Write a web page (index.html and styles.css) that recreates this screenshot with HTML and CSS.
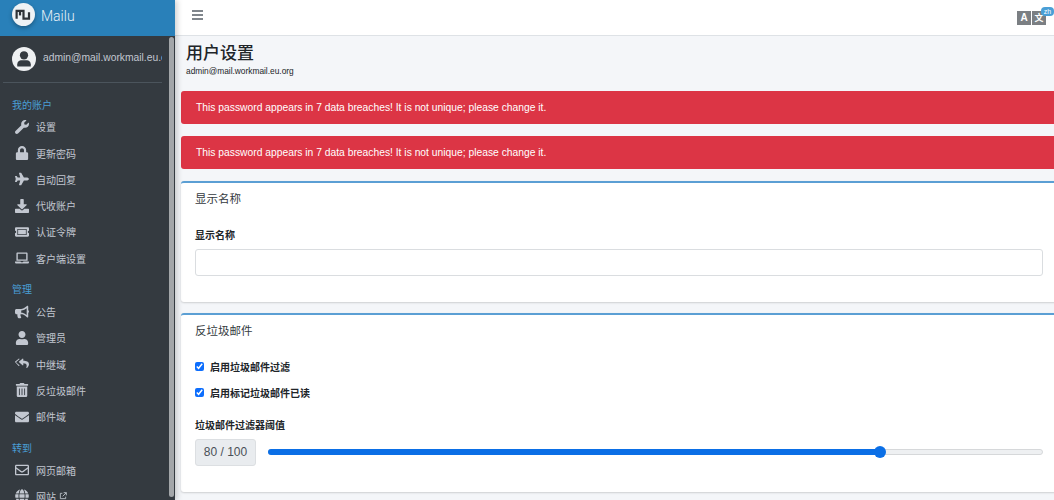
FILE: index.html
```html
<!DOCTYPE html>
<html lang="zh">
<head>
<meta charset="utf-8">
<title>Mailu</title>
<link rel="stylesheet" href="styles.css">
</head>
<body>
<aside class="sidebar">
  <div class="brand">
    <span class="brand-logo">
      <svg viewBox="0 0 18 12" width="17" height="11"><path d="M1.500 10.500V2h7.500v8.500h6V3.500" fill="none" stroke="#2f3338" stroke-width="2.400"/><path d="M5.200 2v5" fill="none" stroke="#2f3338" stroke-width="2.400"/></svg>
    </span>
    <span class="brand-text">Mailu</span>
  </div>
  <div class="side-body">
    <div class="side-scroll">
      <div class="user">
        <span class="avatar">
          <svg viewBox="0 0 24 24" width="18" height="18"><circle cx="12" cy="7" r="5.500" fill="#343a40"/><path d="M3 22v-3c0-3.500 3-5.500 5-5.500h8c2 0 5 2 5 5.500v3z" fill="#343a40"/></svg>
        </span>
        <span class="user-name">admin@mail.workmail.eu.org</span>
      </div>
      <nav class="nav">
        <div class="nav-head nav-head-first">我的账户</div>
        <a class="nav-item"><svg class="ico" viewBox="0 0 512 512"><path d="M507.700 109.100c-2.200-9-13.500-12.100-20.100-5.500l-74.400 74.400-67.900-11.300-11.300-67.900 74.400-74.400c6.600-6.600 3.400-17.900-5.700-20.200-47.400-11.700-99.600 .9-136.600 37.900-39.600 39.600-50.400 97.100-34.100 147.200L18.700 402.800c-25 25-25 65.500 0 90.500 25 25 65.500 25 90.500 0l213.200-213.200c50.100 16.700 107.500 5.700 147.400-34.200 37.100-37.100 49.700-89.300 37.900-136.800z"/></svg><span>设置</span></a>
        <a class="nav-item"><svg class="ico" viewBox="0 0 448 512"><path d="M400 224h-24v-72C376 68.200 307.800 0 224 0S72 68.200 72 152v72H48c-26.500 0-48 21.500-48 48v192c0 26.500 21.500 48 48 48h352c26.500 0 48-21.500 48-48V272c0-26.500-21.500-48-48-48zm-104 0H152v-72c0-39.700 32.300-72 72-72s72 32.300 72 72v72z"/></svg><span>更新密码</span></a>
        <a class="nav-item"><svg class="ico" viewBox="0 0 576 512"><path d="M480 192H365.700L260.600 8.100A16 16 0 0 0 246.700 0h-65.500c-10.600 0-18.300 10.200-15.400 20.400L214.900 192H112l-43.200-57.600c-3-4-7.800-6.400-12.800-6.400H16C5.600 128-2 137.800 .5 147.900L32 256 .5 364.100C-2 374.200 5.600 384 16 384h40c5 0 9.800-2.400 12.800-6.400L112 320h102.900l-49 171.600c-2.900 10.200 4.800 20.400 15.400 20.400h65.500c5.700 0 11-3.100 13.900-8.100L365.700 320H480c35.300 0 96-28.700 96-64s-60.700-64-96-64z"/></svg><span>自动回复</span></a>
        <a class="nav-item"><svg class="ico" viewBox="0 0 512 512"><path d="M216 0h80c13.300 0 24 10.700 24 24v168h87.700c17.800 0 26.700 21.500 14.100 34.100L269.700 378.300c-7.500 7.500-19.800 7.500-27.300 0L90.100 226.100c-12.600-12.600-3.700-34.100 14.100-34.100H192V24c0-13.300 10.700-24 24-24zm296 376v112c0 13.300-10.700 24-24 24H24c-13.300 0-24-10.700-24-24V376c0-13.300 10.700-24 24-24h146.700l49 49c20.100 20.100 52.500 20.100 72.600 0l49-49H488c13.300 0 24 10.700 24 24z"/></svg><span>代收账户</span></a>
        <a class="nav-item"><svg class="ico" viewBox="0 0 576 512"><path d="M128 352h320V160H128zm400-96c0 26.500 21.500 48 48 48v96c0 26.500-21.500 48-48 48H48c-26.500 0-48-21.500-48-48v-96c26.500 0 48-21.500 48-48s-21.500-48-48-48v-96c0-26.500 21.500-48 48-48h480c26.500 0 48 21.500 48 48v96c-26.500 0-48 21.500-48 48zM96 128v256h384V128z" fill-rule="evenodd"/></svg><span>认证令牌</span></a>
        <a class="nav-item"><svg class="ico" viewBox="0 0 640 512"><path d="M624 416H381.500c-.7 19.800-14.700 32-32.700 32H288c-18.700 0-33-17.500-32.700-32H16c-8.800 0-16 7.200-16 16v16c0 35.200 28.800 64 64 64h512c35.200 0 64-28.800 64-64v-16c0-8.800-7.200-16-16-16zM576 48c0-26.400-21.600-48-48-48H112C85.600 0 64 21.600 64 48v336h512zm-64 272H128V64h384z"/></svg><span>客户端设置</span></a>
        <div class="nav-head">管理</div>
        <a class="nav-item"><svg class="ico" viewBox="0 0 576 512"><path d="M576 240c0-23.600-13-44-32-55.100V32c0-8.700-7-32-32-32-7.100 0-14.200 2.400-20 7l-85 68c-42.700 34.200-96.300 53-151 53H64c-35.300 0-64 28.700-64 64v96c0 35.300 28.700 64 64 64h33.700c-1.400 10.500-2.200 21.100-2.200 32 0 39.800 9.300 77.400 25.600 110.900 5.200 10.700 16.500 17.100 28.400 17.100h74.300c26.100 0 41.700-29.800 25.900-50.600-16.400-21.600-26.200-48.500-26.200-77.400 0-11.100 1.600-21.800 4.400-32H256c54.700 0 108.300 18.800 151 53l85 68c5.700 4.600 12.700 7 20 7 25 0 32-22.900 32-32V295.100c19-11.100 32-31.500 32-55.100zm-96 141.400l-33-26.400C392.300 311.200 325.100 288 256 288V192c69.100 0 136.300-23.200 191-67l33-26.400z"/></svg><span>公告</span></a>
        <a class="nav-item"><svg class="ico" viewBox="0 0 448 512"><path d="M224 256c70.700 0 128-57.300 128-128S294.700 0 224 0 96 57.300 96 128s57.300 128 128 128zm89.600 32h-16.700c-22.200 10.200-46.900 16-72.900 16s-50.600-5.800-72.900-16h-16.700C60.200 288 0 348.200 0 422.400V464c0 26.500 21.500 48 48 48h352c26.500 0 48-21.500 48-48v-41.600c0-74.200-60.200-134.400-134.400-134.400z"/></svg><span>管理员</span></a>
        <a class="nav-item"><svg class="ico" viewBox="0 0 576 512"><path d="M166.500 157.800l143-121.500c12.500-10.800 32.500-2 32.500 15v67.700c123 2 234 27 234 152 0 60-39 120-82 150-13.500 9.500-32.500-2.500-27.500-18 44-141-21-173-124.500-178v72c0 17-20 25.800-32.500 15l-143-123.500c-9-7.800-9-22.700 0-30.700zM8.500 157.800l143-121.500c12.500-10.800 32.500-2 32.500 15v9.500L62 165c-12 10.500-12 29.500 0 40l122 104v10c0 17-20 25.800-32.500 15L8.500 188.500c-9-7.800-9-22.700 0-30.700z"/></svg><span>中继域</span></a>
        <a class="nav-item"><svg class="ico" viewBox="0 0 448 512"><path d="M32 464a48 48 0 0 0 48 48h288a48 48 0 0 0 48-48V128H32zm272-256a16 16 0 0 1 32 0v224a16 16 0 0 1-32 0zm-96 0a16 16 0 0 1 32 0v224a16 16 0 0 1-32 0zm-96 0a16 16 0 0 1 32 0v224a16 16 0 0 1-32 0zM432 32H312l-9.400-18.700A24 24 0 0 0 281.100 0H166.800a23.700 23.700 0 0 0-21.400 13.300L136 32H16A16 16 0 0 0 0 48v32a16 16 0 0 0 16 16h416a16 16 0 0 0 16-16V48a16 16 0 0 0-16-16z"/></svg><span>反垃圾邮件</span></a>
        <a class="nav-item"><svg class="ico" viewBox="0 0 512 512"><path d="M502.300 190.800c3.900-3.100 9.700-.2 9.700 4.700V400c0 26.500-21.500 48-48 48H48c-26.500 0-48-21.500-48-48V195.600c0-5 5.700-7.800 9.700-4.700 22.400 17.400 52.100 39.500 154.100 113.600 21.100 15.400 56.700 47.800 92.200 47.600 35.700 .3 72-32.800 92.300-47.600 102-74.100 131.600-96.300 154-113.700zM256 320c23.200 .4 56.600-29.200 73.400-41.400 132.700-96.300 142.800-104.700 173.400-128.700 5.800-4.500 9.200-11.500 9.200-18.900v-19c0-26.500-21.500-48-48-48H48C21.500 64 0 85.500 0 112v19c0 7.400 3.400 14.300 9.200 18.900 30.600 23.900 40.700 32.400 173.400 128.700 16.800 12.200 50.200 41.800 73.400 41.400z"/></svg><span>邮件域</span></a>
        <div class="nav-head">转到</div>
        <a class="nav-item"><svg class="ico" viewBox="0 0 512 512"><path d="M464 64H48C21.500 64 0 85.500 0 112v288c0 26.500 21.500 48 48 48h416c26.500 0 48-21.500 48-48V112c0-26.500-21.500-48-48-48zm0 48v40.800c-22.400 18.300-58.200 46.700-134.600 106.500-16.800 13.200-50.200 45.100-73.400 44.700-23.200 .4-56.600-31.500-73.400-44.700C106.200 199.500 70.400 171.100 48 152.800V112zM48 400V214.400c22.900 18.300 55.400 43.900 104.900 82.600 21.900 17.200 60.100 55.200 103.100 55 42.700 .2 80.500-37.200 103.100-54.900 49.500-38.800 82-64.400 104.900-82.700V400z"/></svg><span>网页邮箱</span></a>
        <a class="nav-item"><svg class="ico" viewBox="0 0 496 512"><path d="M336.500 160C322 70.700 287.800 8 248 8s-74 62.700-88.500 152zM152 256c0 22.200 1.200 43.500 3.300 64h185.300c2.100-20.500 3.300-41.800 3.300-64s-1.200-43.500-3.300-64H155.300c-2.100 20.500-3.300 41.800-3.300 64zm324.700-96c-28.600-67.900-86.500-120.400-158-141.600 24.400 33.800 41.200 84.700 50 141.600zM177.200 18.400C105.800 39.600 47.800 92.100 19.300 160h108c8.700-56.900 25.500-107.800 49.900-141.600zM487.400 192H372.700c2.100 21 3.300 42.500 3.300 64s-1.200 43-3.300 64h114.600c5.500-20.500 8.600-41.800 8.600-64s-3.100-43.500-8.500-64zM120 256c0-21.500 1.200-43 3.300-64H8.600C3.200 212.500 0 233.800 0 256s3.200 43.500 8.600 64h114.600c-2-21-3.200-42.500-3.200-64zm39.500 96c14.500 89.300 48.700 152 88.500 152s74-62.700 88.500-152zm159.300 141.600c71.400-21.200 129.400-73.700 158-141.600h-108c-8.800 56.900-25.600 107.800-50 141.600zM19.300 352c28.600 67.900 86.500 120.400 158 141.600-24.400-33.800-41.200-84.700-50-141.600z"/></svg><span>网站</span><svg class="ext" viewBox="0 0 12 12"><path d="M5 2H2v8h8V7M7 1h4v4M11 1L5.500 6.500" fill="none" stroke="#c2c7d0" stroke-width="1.300"/></svg></a>
      </nav>
    </div>
    <div class="scrollbar"><div class="thumb"></div></div>
  </div>
</aside>
<main class="main">
  <header class="topbar">
    <span class="burger"><i></i><i></i><i></i></span>
    <span class="lang">
      <span class="lang-box">A</span>
      <span class="lang-box lang-box-cjk">文</span>
      <span class="lang-badge">zh</span>
    </span>
  </header>
  <section class="content">
    <div class="page-head">
      <h1>用户设置</h1>
      <small>admin@mail.workmail.eu.org</small>
    </div>
    <div class="alert">This password appears in 7 data breaches! It is not unique; please change it.</div>
    <div class="alert">This password appears in 7 data breaches! It is not unique; please change it.</div>
    <div class="card card-name">
      <div class="card-title">显示名称</div>
      <div class="card-body">
        <label class="field-label">显示名称</label>
        <div class="input"></div>
      </div>
    </div>
    <div class="card card-spam">
      <div class="card-title">反垃圾邮件</div>
      <div class="card-body">
        <label class="check"><input type="checkbox" checked><span>启用垃圾邮件过滤</span></label>
        <label class="check"><input type="checkbox" checked><span>启用标记垃圾邮件已读</span></label>
        <label class="field-label field-label-range">垃圾邮件过滤器阈值</label>
        <div class="range-row">
          <span class="range-value">80 / 100</span>
          <div class="range">
            <div class="range-fill"></div>
            <div class="range-thumb"></div>
          </div>
        </div>
      </div>
    </div>
  </section>
</main>
</body>
</html>
```
FILE: styles.css
```css
* { box-sizing: border-box; }
html, body { margin: 0; height: 500px; overflow: hidden; }
body {
  display: flex;
  font-family: "Liberation Sans", "Noto Sans CJK SC", sans-serif;
  background: #f4f6f9;
  color: #212529;
  font-size: 10.300px;
}
.sidebar {
  width: 175px;
  flex: none;
  height: 500px;
  display: flex;
  flex-direction: column;
  background: #343a40;
  box-shadow: 2px 0 6px rgba(0,0,0,.2);
  position: relative;
  z-index: 2;
}
.brand {
  height: 36px;
  flex: none;
  background: #2980b9;
  display: flex;
  align-items: center;
  padding: 0 0 7px 12px;
  gap: 6px;
}
.brand-logo {
  width: 23px;
  height: 23px;
  border-radius: 50%;
  background: #eef2f5;
  display: flex;
  align-items: center;
  justify-content: center;
  box-shadow: 0 2px 4px rgba(0,0,0,.3);
}
.brand-text {
  font-family: Roboto, sans-serif;
  font-weight: 300;
  font-size: 14px;
  color: #e8f1f7;
  position: relative;
  top: 1px;
}
.side-body { flex: 1; display: flex; min-height: 0; }
.side-scroll { width: 169px; flex: none; overflow: hidden; }
.scrollbar { width: 6px; flex: none; padding: 1px 0 0 0; }
.thumb { width: 5px; height: 460px; background: #a3a6a9; border-radius: 3px; }
.user {
  margin: 0 7px 0 3px;
  padding: 10px 0 11px 9px;
  height: 47px;
  display: flex;
  align-items: center;
  gap: 7px;
  border-bottom: 1px solid #4b545c;
}
.avatar {
  width: 24px;
  height: 24px;
  border-radius: 50%;
  background: #eef0f2;
  flex: none;
  display: flex;
  align-items: center;
  justify-content: center;
}
.user-name {
  font-size: 10.300px;
  color: #c2c7d0;
  white-space: nowrap;
  overflow: hidden;
  margin-top: -2px;
}
.nav { padding-left: 12px; }
.nav-head {
  color: #4a9fd6;
  font-size: 10px;
  height: 17px;
  line-height: 17px;
  margin-top: 10px;
}
.nav-head-first { margin-top: 13.600px; }
.nav-item {
  display: flex;
  align-items: center;
  height: 26.300px;
  color: #c2c7d0;
  font-size: 10px;
  white-space: nowrap;
}
.ico {
  width: 14px;
  height: 14px;
  fill: #c2c7d0;
  margin-left: 3px;
  margin-right: 7px;
  flex: none;
}
.ext { width: 8px; height: 8px; margin-left: 3px; }
.main { flex: 1; min-width: 0; height: 500px; overflow: hidden; }
.topbar {
  height: 36px;
  background: #fff;
  border-bottom: 1px solid #dee2e6;
  display: flex;
  align-items: center;
  justify-content: space-between;
  padding: 0 8px 0 17px;
}
.burger { display: flex; flex-direction: column; gap: 2px; width: 11px; margin-top: -6px; }
.burger i { display: block; height: 2px; background: #80868c; }
.lang { display: flex; gap: 1px; position: relative; }
.lang-box {
  width: 14px;
  height: 14px;
  background: #7b7f83;
  color: #fff;
  font-weight: 700;
  font-size: 10px;
  line-height: 14px;
  text-align: center;
}
.lang-box-cjk { font-size: 9px; }
.lang-badge {
  position: absolute;
  right: -8px;
  top: -4px;
  width: 13px;
  height: 9px;
  background: #4a9fd6;
  color: #fff;
  font-size: 7px;
  line-height: 9px;
  text-align: center;
  border-radius: 4px;
}
.content { padding: 0 0 0 6px; width: 882px; }
.page-head { padding: 9px 0 0 5px; height: 55px; }
.page-head h1 {
  margin: 0;
  font-size: 17px;
  line-height: 18px;
  font-weight: 500;
  color: #212529;
}
.page-head small { display: block; font-size: 8.350px; line-height: 12px; margin-top: 2px; }
.alert {
  height: 33px;
  background: #dc3545;
  color: #fff;
  border-radius: 3px;
  padding: 0 15px;
  line-height: 34px;
  margin-bottom: 12px;
  font-size: 10.300px;
}
.card {
  background: #fff;
  border-top: 2px solid #5b9fd4;
  border-radius: 3px;
  box-shadow: 0 1px 2px rgba(0,0,0,.16);
  margin-bottom: 11px;
}
.card-name { height: 121px; }
.card-spam { height: 179px; }
.card-title {
  height: 32px;
  padding: 0 14px;
  line-height: 33px;
  font-size: 11.500px;
  color: #343a40;
}
.card-body { padding: 14px 14px 0; }
.field-label { display: block; font-weight: 600; font-size: 10px; line-height: 14px; margin: 0; }
.input {
  height: 27px;
  margin-top: 6px;
  border: 1px solid #dadde0;
  border-radius: 3px;
  background: #fff;
}
.check {
  display: flex;
  align-items: center;
  height: 26.300px;
  font-weight: 600;
  font-size: 10px;
  gap: 6px;
}
.check input {
  margin: 0;
  width: 9px;
  height: 9px;
  accent-color: #0d6efd;
}
.card-spam .card-body { padding-top: 6px; }
.field-label-range { margin-top: 13px; }
.range-row { display: flex; align-items: center; margin-top: 6px; gap: 12px; }
.range-value {
  width: 61px;
  height: 27px;
  background: #e9ecef;
  border: 1px solid #dcdfe2;
  border-radius: 3px;
  text-align: center;
  line-height: 25px;
  font-size: 12px;
  color: #495057;
}
.range {
  flex: 1;
  height: 6px;
  background: #eef0f2;
  border: 1px solid #d6d8da;
  border-radius: 3px;
  position: relative;
}
.range-fill {
  position: absolute;
  left: -1px;
  top: -1px;
  height: 6px;
  width: 612px;
  background: #0b6fe6;
  border-radius: 3px;
}
.range-thumb {
  position: absolute;
  left: 605px;
  top: -4px;
  width: 12px;
  height: 12px;
  border-radius: 50%;
  background: #0b6fe6;
}
```
